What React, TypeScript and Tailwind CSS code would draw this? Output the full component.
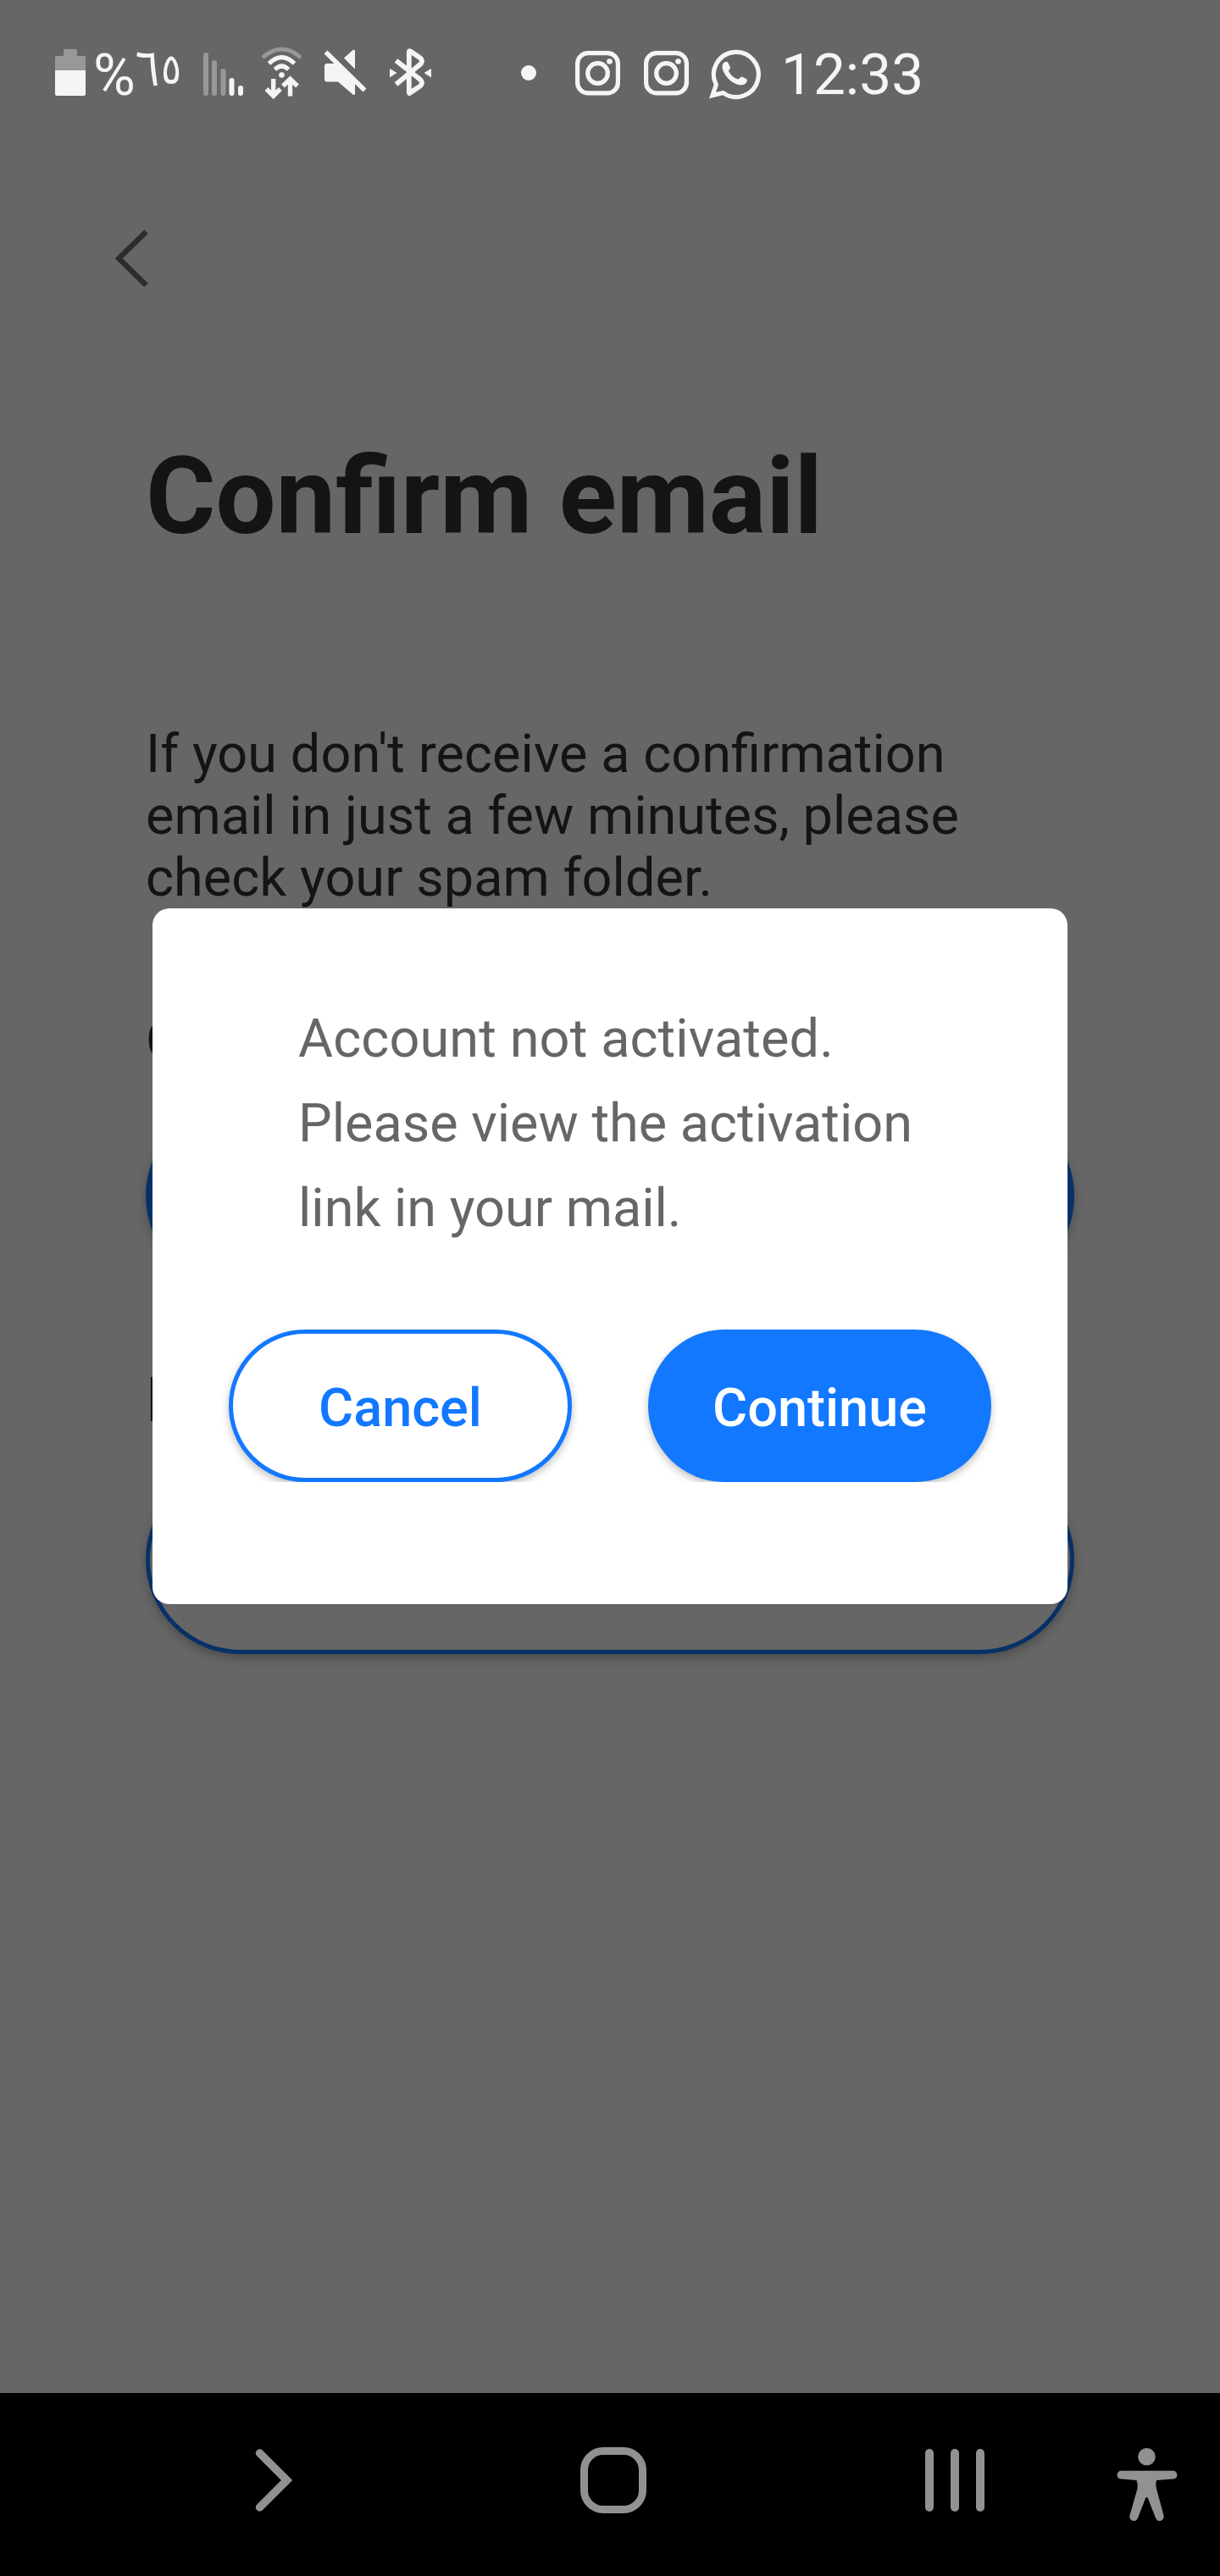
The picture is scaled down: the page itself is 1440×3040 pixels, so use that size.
import React from "react";

function StatusBar() {
  return (
    <header className="flex h-[174px] items-start pt-[40px] text-[#f5f5f5]">
      <svg className="ml-[50px] h-[90px] w-[60px] shrink-0" viewBox="0 0 60 90">
        <path d="M25 19.500a1.500 1.500 0 0 1 1.500-1.500h13a1.500 1.500 0 0 1 1.500 1.500V26h8a2 2 0 0 1 2 2v15H15V28a2 2 0 0 1 2-2h8z" fill="#989898" />
        <path d="M15 43h36v28a2 2 0 0 1-2 2H17a2 2 0 0 1-2-2z" fill="#f5f5f5" />
      </svg>
      <div className="flex h-[90px] w-[130px] shrink-0">
        <span className="w-[47px] pt-[9px] text-[68px] leading-[80px]">%</span>
        <span className="w-[33px] pt-[3px] font-['Noto_Sans_Arabic'] text-[58px] leading-[80px]">٦</span>
        <span className="w-[30px] pt-[2px] font-['DejaVu_Sans_Condensed'] text-[50px] leading-[80px]">٥</span>
      </div>
      <svg className="h-[90px] w-[50px] shrink-0" viewBox="240 0 50 90" overflow="visible" fill="none" strokeWidth="6" strokeLinecap="round">
        <path d="M243 25v45M253 34v36M263.500 44v26" stroke="#989898" />
        <path d="M273.500 55v15M284 64v6" stroke="#f5f5f5" />
      </svg>
      <svg className="h-[90px] w-[250px] shrink-0" viewBox="0 0 250 90" fill="none" stroke="#f5f5f5">
        <path d="M20 28Q42.500 8 65 28" stroke="#989898" strokeWidth="5" />
        <path d="M27.500 35Q42.500 20 57.500 35M34.500 42Q42.500 34 50.500 42" strokeWidth="5" />
        <circle cx="42.500" cy="48.500" r="3.300" fill="#f5f5f5" stroke="none" />
        <path d="M32.700 53v20M24.500 65l8.200 8.200L40.900 65M52.500 73.500v-20M44 61.500l8.500-8.200L61 61.500" strokeWidth="5.400" />
        <path d="M93 38a3 3 0 0 1 3-3h12L129 57v13.500q0 2.500-2.500 1L109 56.500H96a3 3 0 0 1-3-3zM126.500 19q2.500-1 2.500 1V41.500L116 28.500z" fill="#f5f5f5" stroke="none" />
        <path d="M94.500 21.500L140.500 66.500" strokeWidth="5.500" />
        <path d="M177.500 31.500L203 51.500Q213 58 203 63.500L194 69.500Q192.800 71 192.800 68V22Q192.800 19 195 21L204 27Q212 32 204 37.500L177.500 59.500" strokeWidth="5.800" />
        <path d="M170 41l8.500 5-8.500 5.500zM219 41l-8.500 5 8.500 5.500z" fill="#f5f5f5" stroke="none" />
      </svg>
      <svg className="ml-[50px] h-[90px] w-[332px] shrink-0" viewBox="0 0 332 90" fill="none" stroke="#f5f5f5">
        <circle cx="34" cy="46" r="9" fill="#f5f5f5" stroke="none" />
        {[0, 81].map((dx) => (
          <g key={dx} transform={`translate(${dx} 0)`} strokeWidth="5.200">
            <rect x="91.600" y="22.600" width="47.800" height="47.300" rx="12.500" />
            <circle cx="115.500" cy="46.500" r="11.800" />
            <circle cx="129.500" cy="32.500" r="3.300" fill="#f5f5f5" stroke="none" />
          </g>
        ))}
        <path d="M251 72.500L255.300 60A26.500 26.500 0 1 1 263.500 69.500Z" strokeWidth="5.200" />
        <path d="M265 33.500c3-1.500 4-.5 5 2l2 4c.5 1.500-2.500 3-2 4.500c2.500 4.500 6 8 11 9.500c1.500.5 3-3.500 4.500-3l5.500 2.500c1.500 1 .5 4-.5 5c-2 2.500-5.500 2.500-8 2.200c-9-1.700-17.500-10.700-19.500-18.200c-.7-3.500-.5-7 2-8.500z" fill="#f5f5f5" stroke="none" />
      </svg>
      <span className="pt-[8px] text-[67.5px] leading-[80px]">12:33</span>
    </header>
  );
}

function ConfirmEmailPage() {
  return (
    <main className="flex flex-col px-[172px] text-[#141414]">
      <svg className="-ml-[42px] mt-[91px] h-[80px] w-[50px]" viewBox="130 265 50 80" fill="none">
        <path d="M172.500 273.500L140.300 305L172.500 336.500" stroke="#2c2c2c" strokeWidth="6.500" />
      </svg>
      <h1 className="mt-[167px] text-[126px] leading-[148px] font-bold">Confirm email</h1>
      <p className="mt-[193px] w-[1096px] text-[63px] leading-[73px]">
        <span className="tracking-[0.08px]">If you don't receive a </span>
        confirmation
        <br />
        email in just a few minutes, please
        <br />
        <span className="tracking-[0.06px]">check your spam folder.</span>
      </p>
      <p className="mt-[119px] text-[63px] leading-[73px]">C</p>
      <div className="mt-[36px] h-[223px] rounded-full bg-[#073066] shadow-[0_5px_12px_rgba(0,0,0,0.25)]" />
      <p className="mt-[88px] text-[72px] leading-[84px]">D</p>
      <div className="mt-[34px] h-[223px] rounded-full border-[5px] border-[#073066] bg-[#666666] shadow-[0_5px_12px_rgba(0,0,0,0.25)]" />
    </main>
  );
}

function ActivationDialog() {
  return (
    <section role="dialog" className="absolute top-[1072px] left-[180px] flex h-[821px] w-[1080px] flex-col rounded-[20px] bg-white px-[90px] pt-[104px]">
      <p className="pl-[82px] text-[63px] leading-[100px] whitespace-nowrap text-[#666666]">
        <span className="tracking-[0.12px]">Account not activated.</span>
        <br />
        Please view the activation
        <br />
        link in your mail.
      </p>
      <div className="mt-[93px] flex h-[180px] justify-between overflow-y-clip text-[63px] font-medium">
        <button className="h-[180px] w-[405px] rounded-full border-[5px] border-[#1278ff] bg-white pt-[6px] text-[#1278ff] shadow-[0_4px_10px_rgba(0,0,0,0.25)]">Cancel</button>
        <button className="h-[180px] w-[405px] rounded-full bg-[#1278ff] pt-[6px] text-white shadow-[0_4px_10px_rgba(0,0,0,0.25)]">Continue</button>
      </div>
    </section>
  );
}

function NavigationBar() {
  return (
    <nav className="flex h-[216px] items-center bg-black pb-[10px]">
      <svg className="ml-[295px] h-[90px] w-[60px] shrink-0" viewBox="295 2882 60 90" fill="none">
        <path d="M306.500 2895L338.500 2927L306.500 2959" stroke="#919191" strokeWidth="9.500" strokeLinecap="round" />
      </svg>
      <div className="ml-[330px] h-[78px] w-[78px] shrink-0 rounded-[27px] border-[9.500px] border-[#919191]" />
      <div className="ml-[329px] flex h-[74px] w-[70px] shrink-0 justify-between">
        <div className="w-[10px] rounded-full bg-[#919191]" />
        <div className="w-[10px] rounded-full bg-[#919191]" />
        <div className="w-[10px] rounded-full bg-[#919191]" />
      </div>
      <svg className="ml-[148px] h-[110px] w-[90px] shrink-0" viewBox="1310 2872 90 110" fill="#919191">
        <circle cx="1353.500" cy="2899.300" r="10.300" />
        <path d="M1323.500 2915.800H1384.500a4.800 4.800 0 0 1 0 9.800L1365 2927Q1363.500 2932 1365 2937L1373.500 2968.500a4.800 4.800 0 0 1-9.500 3L1354.800 2948Q1353.500 2946 1352.200 2948L1343 2971.500a4.800 4.800 0 0 1-9.500-3L1342.500 2937Q1343.500 2932 1341.500 2927L1323.500 2925.600a4.800 4.800 0 0 1 0-9.800z" />
      </svg>
    </nav>
  );
}

export default function App() {
  return (
    <div className="relative flex h-[3040px] w-[1440px] flex-col overflow-hidden bg-[#666666] font-['Roboto',sans-serif]">
      <StatusBar />
      <div className="h-[2650px] shrink-0">
        <ConfirmEmailPage />
      </div>
      <NavigationBar />
      <ActivationDialog />
    </div>
  );
}
